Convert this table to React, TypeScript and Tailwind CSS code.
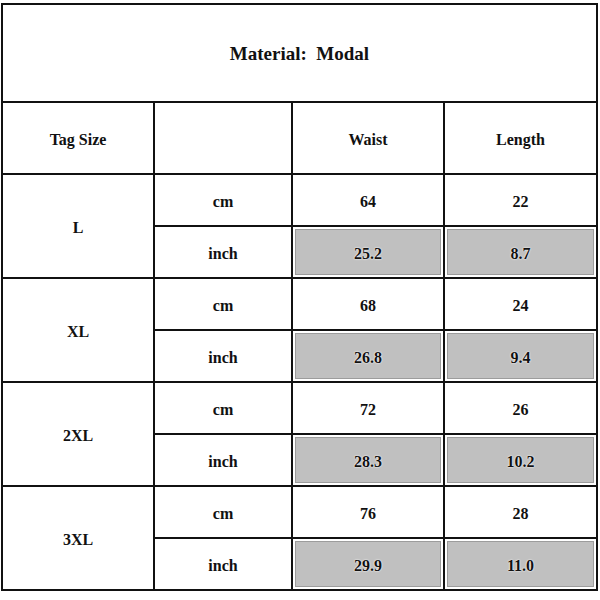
const rows = [
  { size: "L", cm: ["64", "22"], inch: ["25.2", "8.7"] },
  { size: "XL", cm: ["68", "24"], inch: ["26.8", "9.4"] },
  { size: "2XL", cm: ["72", "26"], inch: ["28.3", "10.2"] },
  { size: "3XL", cm: ["76", "28"], inch: ["29.9", "11.0"] },
];

const Cell = ({ children, className = "" }: { children?: React.ReactNode; className?: string }) => (
  <div className={`bg-white flex items-center justify-center pt-[3px] ${className}`}>{children}</div>
);

const GreyCell = ({ value }: { value: string }) => (
  <div className="bg-white p-[2px] flex">
    <div className="flex-1 bg-[#c0c0c0] border border-[#9c9c9c] flex items-center justify-center pt-[3px] [text-shadow:0_0_2px_#fff,0_0_1px_#fff]">
      {value}
    </div>
  </div>
);

export default function App() {
  return (
    <div className="w-[600px] h-[600px] bg-white pt-[3px] pl-[1px]">
      <div className="w-[597px] bg-[#111] p-[2px] grid gap-[2px] text-[#111] font-bold text-[16px] font-['Liberation_Serif','DejaVu_Serif',serif]">
        {/* Title */}
        <Cell className="h-[96px] text-[19px]">Material:&nbsp;&nbsp;Modal</Cell>

        <div className="grid grid-cols-[150px_136px_150px_151px] gap-[2px]">
          {/* Header */}
          <Cell className="h-[70px]">Tag Size</Cell>
          <Cell />
          <Cell>Waist</Cell>
          <Cell>Length</Cell>
        </div>

        {rows.map((r) => (
          <div key={r.size} className="grid grid-cols-[150px_136px_150px_151px] grid-rows-[50px_50px] gap-[2px]">
            <Cell className="row-span-2">{r.size}</Cell>
            <Cell>cm</Cell>
            <Cell>{r.cm[0]}</Cell>
            <Cell>{r.cm[1]}</Cell>
            <Cell>inch</Cell>
            <GreyCell value={r.inch[0]} />
            <GreyCell value={r.inch[1]} />
          </div>
        ))}
      </div>
    </div>
  );
}
